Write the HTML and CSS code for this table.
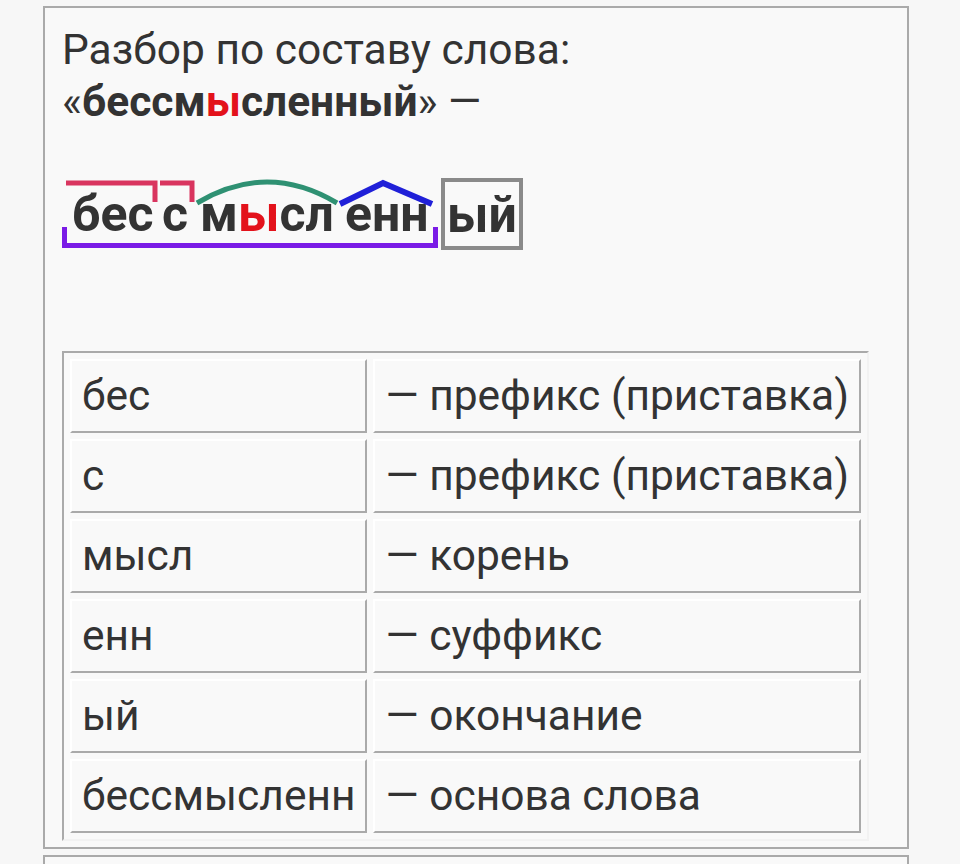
FILE: index.html
```html
<!DOCTYPE html>
<html lang="ru">
<head>
<meta charset="utf-8">
<title>Разбор по составу слова</title>
<link rel="stylesheet" href="styles.css">
</head>
<body>
<div class="card">
  <div class="title">Разбор по составу слова:<br>«<b>бессм<span class="red">ы</span>сленный</b>» —</div>
  <div class="scheme">
    <svg class="marks" width="460" height="72" viewBox="0 0 460 72">
      <polyline class="pre" points="4,5 93,5 93,24"/>
      <polyline class="pre" points="98,5 130,5 130,24"/>
      <path class="root" d="M135 25 Q205 -17 275 25"/>
      <polyline class="suf" points="278,26 321,5 370,26"/>
      <polyline class="stem" points="2.5,49 2.5,67.5 373.5,67.5 373.5,49"/>
    </svg>
    <div class="word">
      <span class="mp m1">бес</span>
      <span class="mp m2">с</span>
      <span class="mp m3">м<span class="red">ы</span>сл</span>
      <span class="mp m4">енн</span>
      <span class="mp m5">ый</span>
    </div>
  </div>
  <table class="parts">
    <tr><td>бес</td><td>— префикс (приставка)</td></tr>
    <tr><td>с</td><td>— префикс (приставка)</td></tr>
    <tr><td>мысл</td><td>— корень</td></tr>
    <tr><td>енн</td><td>— суффикс</td></tr>
    <tr><td>ый</td><td>— окончание</td></tr>
    <tr><td>бессмысленн</td><td>— основа слова</td></tr>
  </table>
</div>
<div class="card next"></div>
</body>
</html>
```
FILE: styles.css
```css
html, body {
  margin: 0;
  padding: 0;
  background: #f7f7f7;
}
body {
  padding: 6px 0 0 43px;
  font-family: Roboto, "Noto Sans", sans-serif;
  color: #333;
  overflow: hidden;
  height: 858px;
}
.card {
  width: 866px;
  border: 2px solid #aaa;
  background: #f9f9f9;
  padding: 16px 0 6px 17px;
  box-sizing: border-box;
}
.card.next {
  margin-top: 6px;
  height: 40px;
  border-bottom: none;
}
.title {
  font-size: 42.5px;
  line-height: 52px;
}
.title b {
  font-weight: 700;
}
.red {
  color: #e3121b;
}
.scheme {
  position: relative;
  margin-top: 50px;
  height: 72px;
}
.marks {
  position: absolute;
  left: 0;
  top: 0;
  overflow: visible;
  fill: none;
  stroke-width: 5;
}
.pre { stroke: #d9355f; }
.root { stroke: #2f9173; }
.suf { stroke: #2020d8; stroke-width: 6; }
.stem { stroke: #7a1be6; }
.word {
  display: flex;
  align-items: center;
  height: 72px;
  font-size: 50px;
  font-weight: 700;
  line-height: 60px;
}
.mp {
  display: block;
  flex: none;
}
.m1 { margin-left: 10px; width: 90px; }
.m2 { width: 38px; }
.m3 { width: 145px; }
.m4 { width: 96px; }
.m5 {
  box-sizing: border-box;
  height: 72px;
  border: 4px solid #8a8a8a;
  padding: 0 2px;
  line-height: 66px;
}
.parts {
  margin-top: 101px;
  border-collapse: separate;
  border-spacing: 6px;
  border: 2px solid;
  border-color: #aaa #f2f2f2 #f2f2f2 #aaa;
  font-size: 42.5px;
}
.parts td {
  border: 2px solid;
  border-color: #fff #aaa #aaa #fff;
  padding: 0 10px;
  line-height: 70px;
  white-space: nowrap;
  color: #333;
}
```
